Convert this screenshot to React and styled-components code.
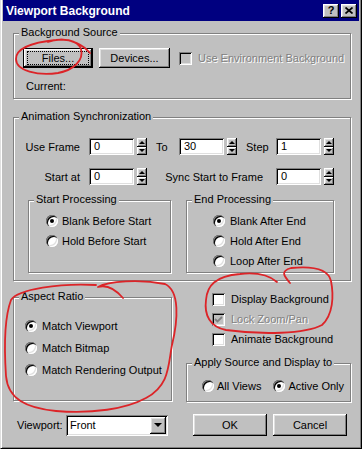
import React from 'react';
import styled, { createGlobalStyle, css } from 'styled-components';

const Global = createGlobalStyle`
  html, body { margin: 0; padding: 0; background: #c0c0c0; }
  body { font-family: "Liberation Sans", Arial, sans-serif; font-size: 11px; color: #000; }
  * { box-sizing: border-box; }
`;

const raised = css`
  background: #c0c0c0;
  box-shadow: inset -1px -1px 0 #000, inset 1px 1px 0 #fff, inset -2px -2px 0 #808080, inset 2px 2px 0 #dfdfdf;
`;

const sunken = css`
  box-shadow: inset 1px 1px 0 #808080, inset -1px -1px 0 #fff, inset 2px 2px 0 #000, inset -2px -2px 0 #dfdfdf;
`;

const Window = styled.div`
  position: relative;
  width: 362px;
  height: 449px;
  background: #c0c0c0;
  border-left: 1px solid #dfdfdf;
  border-right: 1px solid #000;
  border-bottom: 1px solid #000;
  padding: 0 2px 2px 2px;
  box-shadow: inset 1px 0 0 #fff, inset -1px -1px 0 #808080;
  display: flex;
  flex-direction: column;
`;

const TitleBar = styled.div`
  height: 21px;
  background: #000080;
  display: flex;
  align-items: center;
  justify-content: space-between;
  padding: 0 2px 0 3px;
`;

const TitleText = styled.div`
  color: #fff;
  font-weight: bold;
  font-size: 12px;
  line-height: 14px;
`;

const Caption = styled.div`
  display: flex;
  gap: 2px;
`;

const CaptionButton = styled.div`
  ${raised};
  width: 16px;
  height: 14px;
  display: flex;
  align-items: center;
  justify-content: center;
  font-weight: bold;
  font-size: 11px;
  line-height: 11px;
`;

const Body = styled.div`
  display: flex;
  flex-direction: column;
  padding: 0 8px 0 10px;
`;

const Group = styled.div`
  position: relative;
  border: 1px solid #808080;
  box-shadow: inset 1px 1px 0 #fff, 1px 1px 0 #fff;
  margin-top: ${p => p.$mt || 0}px;
  padding: ${p => p.$pad || '0'};
  ${p => p.$w && css`width: ${p.$w}px; flex: none;`}
`;

const GroupLabel = styled.span`
  position: absolute;
  top: -8px;
  left: 5px;
  padding: 0 2px;
  line-height: 13px;
  background: #c0c0c0;
  white-space: nowrap;
`;

const ButtonRow = styled.div`
  display: flex;
  align-items: center;
  gap: 6px;
`;

const Button = styled.div`
  ${raised};
  position: relative;
  width: ${p => p.$w}px;
  height: ${p => p.$h || 20}px;
  display: flex;
  align-items: center;
  justify-content: center;
  flex: none;
  ${p => p.$ml && css`margin-left: ${p.$ml};`}
  ${p => p.$mr && css`margin-right: ${p.$mr}px;`}
  ${p => p.$default && css`
    border: 1px solid #000;
    &::after {
      content: '';
      position: absolute;
      inset: 2px 3px;
      border: 1px dotted #000;
    }
  `}
`;

const Current = styled.div`
  margin: 12px 0 0 3px;
  line-height: 13px;
`;

const CheckItem = styled.div`
  display: flex;
  align-items: center;
  gap: 6px;
  height: ${p => p.$h || 20}px;
  ${p => p.$ml && css`margin-left: ${p.$ml}px;`}
`;

const CheckBox = styled.span`
  ${sunken};
  width: 13px;
  height: 13px;
  flex: none;
  background: ${p => (p.$disabled ? '#c0c0c0' : '#fff')};
  display: flex;
  align-items: center;
  justify-content: center;
`;

const ItemText = styled.span`
  white-space: nowrap;
  line-height: 13px;
  ${p => p.$disabled && css`
    color: #808080;
    text-shadow: 1px 1px 0 #fff;
  `}
`;

const Check = ({ label, checked, disabled, ml }) => (
  <CheckItem $ml={ml}>
    <CheckBox $disabled={disabled}>
      {checked && (
        <svg width="9" height="9" viewBox="0 0 9 9">
          <polyline points="1,4 3.5,6.5 8,2" fill="none" stroke={disabled ? '#808080' : '#000'} strokeWidth="1.8" />
        </svg>
      )}
    </CheckBox>
    <ItemText $disabled={disabled}>{label}</ItemText>
  </CheckItem>
);

const RadioItem = styled.div`
  display: flex;
  align-items: center;
  gap: ${p => p.$gap || 4}px;
  height: ${p => p.$h || 20}px;
`;

const RadioCircle = styled.span`
  width: 12px;
  height: 12px;
  flex: none;
  border-radius: 50%;
  background: #fff;
  position: relative;
  box-shadow: inset 1px 1px 0 #808080, inset 2px 2px 0 #000, inset -1px -1px 0 #fff, inset -2px -2px 0 #dfdfdf;
  ${p => p.$on && css`
    &::after {
      content: '';
      position: absolute;
      left: 4px;
      top: 4px;
      width: 4px;
      height: 4px;
      border-radius: 50%;
      background: #000;
    }
  `}
`;

const Radio = ({ label, on, h, gap }) => (
  <RadioItem $h={h} $gap={gap}>
    <RadioCircle $on={on} />
    <ItemText>{label}</ItemText>
  </RadioItem>
);

const SyncGrid = styled.div`
  display: grid;
  grid-template-columns: 75px 58px 32px 58px 39px 58px;
  grid-auto-rows: 17px;
  row-gap: 13px;
  align-items: center;
`;

const FieldLabel = styled.span`
  white-space: nowrap;
  justify-self: ${p => (p.$left ? 'start' : 'end')};
  padding: ${p => (p.$left ? '0 0 0 9px' : '0 9px 0 0')};
`;

const SyncLabel = styled.span`
  grid-column: 3 / span 3;
  justify-self: end;
  padding-right: 13px;
  white-space: nowrap;
`;

const SpinWrap = styled.div`
  display: flex;
  gap: 3px;
  height: 17px;
`;

const Input = styled.div`
  ${sunken};
  background: #fff;
  width: 45px;
  height: 17px;
  padding: 2px 0 0 5px;
  line-height: 12px;
`;

const SpinButtons = styled.div`
  display: flex;
  flex-direction: column;
  width: 10px;
`;

const SpinButton = styled.div`
  ${raised};
  flex: 1;
  display: flex;
  align-items: center;
  justify-content: center;
  &::after {
    content: '';
    border-left: 3px solid transparent;
    border-right: 3px solid transparent;
    ${p => (p.$down ? 'border-top: 3px solid #000;' : 'border-bottom: 3px solid #000;')}
  }
`;

const Spin = ({ value }) => (
  <SpinWrap>
    <Input>{value}</Input>
    <SpinButtons>
      <SpinButton />
      <SpinButton $down />
    </SpinButtons>
  </SpinWrap>
);

const ProcRow = styled.div`
  display: flex;
  gap: 15px;
  margin-top: 15px;
  padding-left: 14px;
  align-items: stretch;
`;

const Lower = styled.div`
  display: flex;
  align-items: flex-start;
  margin-top: 8px;
`;

const RightCol = styled.div`
  margin-left: 14px;
  width: 165px;
  display: flex;
  flex-direction: column;
`;

const ApplyRow = styled.div`
  display: flex;
  gap: 12px;
`;

const Footer = styled.div`
  display: flex;
  align-items: center;
  margin-top: 12px;
  height: 22px;
`;

const FooterLabel = styled.span`
  width: 49px;
  margin-left: 4px;
  white-space: nowrap;
`;

const Select = styled.div`
  ${sunken};
  background: #fff;
  width: 102px;
  height: 21px;
  display: flex;
  align-items: center;
  justify-content: space-between;
  padding: 2px 2px 2px 4px;
`;

const DropButton = styled.div`
  ${raised};
  width: 16px;
  height: 17px;
  display: flex;
  align-items: center;
  justify-content: center;
  &::after {
    content: '';
    border-left: 4px solid transparent;
    border-right: 4px solid transparent;
    border-top: 4px solid #000;
  }
`;

const Annotations = styled.svg`
  position: absolute;
  top: 0;
  left: -1px;
  pointer-events: none;
`;

export default function App() {
  return (
    <>
      <Global />
      <Window>
        <TitleBar>
          <TitleText>Viewport Background</TitleText>
          <Caption>
            <CaptionButton>?</CaptionButton>
            <CaptionButton>
              <svg width="8" height="7" viewBox="0 0 8 7">
                <path d="M0.5 0.5 L7.5 6.5 M7.5 0.5 L0.5 6.5" stroke="#000" strokeWidth="1.7" />
              </svg>
            </CaptionButton>
          </Caption>
        </TitleBar>
        <Body>
          <Group $mt={12} $pad="14px 0 5px 9px">
            <GroupLabel>Background Source</GroupLabel>
            <ButtonRow>
              <Button $default $w={70}>Files...</Button>
              <Button $w={71}>Devices...</Button>
              <Check ml={3} disabled label="Use Environment Background" />
            </ButtonRow>
            <Current>Current:</Current>
          </Group>

          <Group $mt={18} $pad="20px 0 7px 0">
            <GroupLabel>Animation Synchronization</GroupLabel>
            <SyncGrid>
              <FieldLabel>Use Frame</FieldLabel>
              <Spin value="0" />
              <FieldLabel $left>To</FieldLabel>
              <Spin value="30" />
              <FieldLabel $left>Step</FieldLabel>
              <Spin value="1" />
              <FieldLabel>Start at</FieldLabel>
              <Spin value="0" />
              <SyncLabel>Sync Start to Frame</SyncLabel>
              <Spin value="0" />
            </SyncGrid>
            <ProcRow>
              <Group $w={143} $pad="10px 0 1px 17px">
                <GroupLabel>Start Processing</GroupLabel>
                <Radio on label="Blank Before Start" />
                <Radio label="Hold Before Start" />
              </Group>
              <Group $w={148} $pad="10px 0 1px 26px">
                <GroupLabel>End Processing</GroupLabel>
                <Radio on gap={5} label="Blank After End" />
                <Radio gap={5} label="Hold After End" />
                <Radio gap={5} label="Loop After End" />
              </Group>
            </ProcRow>
          </Group>

          <Lower>
            <Group $w={159} $mt={8} $pad="17px 0 19px 11px">
              <GroupLabel>Aspect Ratio</GroupLabel>
              <Radio on h={22} gap={5} label="Match Viewport" />
              <Radio h={22} gap={5} label="Match Bitmap" />
              <Radio h={22} gap={5} label="Match Rendering Output" />
            </Group>
            <RightCol>
              <Check ml={26} label="Display Background" />
              <Check ml={26} checked disabled label="Lock Zoom/Pan" />
              <Check ml={26} label="Animate Background" />
              <Group $mt={14} $pad="12px 0 5px 15px">
                <GroupLabel>Apply Source and Display to</GroupLabel>
                <ApplyRow>
                  <Radio gap={3} label="All Views" />
                  <Radio on gap={3} label="Active Only" />
                </ApplyRow>
              </Group>
            </RightCol>
          </Lower>

          <Footer>
            <FooterLabel>Viewport:</FooterLabel>
            <Select>
              <span>Front</span>
              <DropButton />
            </Select>
            <Button $w={74} $h={22} $ml="auto">OK</Button>
            <Button $w={74} $h={22} $ml="6px" $mr={4}>Cancel</Button>
          </Footer>
        </Body>

        <Annotations width="362" height="449" viewBox="0 0 362 449">
          <g fill="none" stroke="#dc2428" strokeWidth="1.8" strokeLinecap="round" strokeLinejoin="round">
            <path d="M 90 53 C 84 46, 72 38, 56 40 C 36 42, 16 47, 16 59 C 16 71, 38 76, 58 73 C 74 70, 84 60, 81 49 C 78 40, 62 37, 48 42" />
            <path d="M 123 298 C 116 290, 108 284, 98 287 C 108 281, 140 279, 165 284 C 180 291, 178 320, 172 345 C 168 365, 170 385, 146 398 C 126 409, 92 414, 56 411 C 26 408, 8 399, 6 376 C 4 346, 5 316, 11 300 C 18 289, 60 283, 96 285" />
            <path d="M 290 283 C 284 276, 280 271, 291 268 C 311 266, 328 268, 331 281 C 334 296, 333 315, 322 325 C 305 334, 262 335, 226 330 C 210 327, 204 315, 206 300 C 207 286, 215 276, 240 274 C 258 272, 270 276, 277 282" />
          </g>
        </Annotations>
      </Window>
    </>
  );
}
